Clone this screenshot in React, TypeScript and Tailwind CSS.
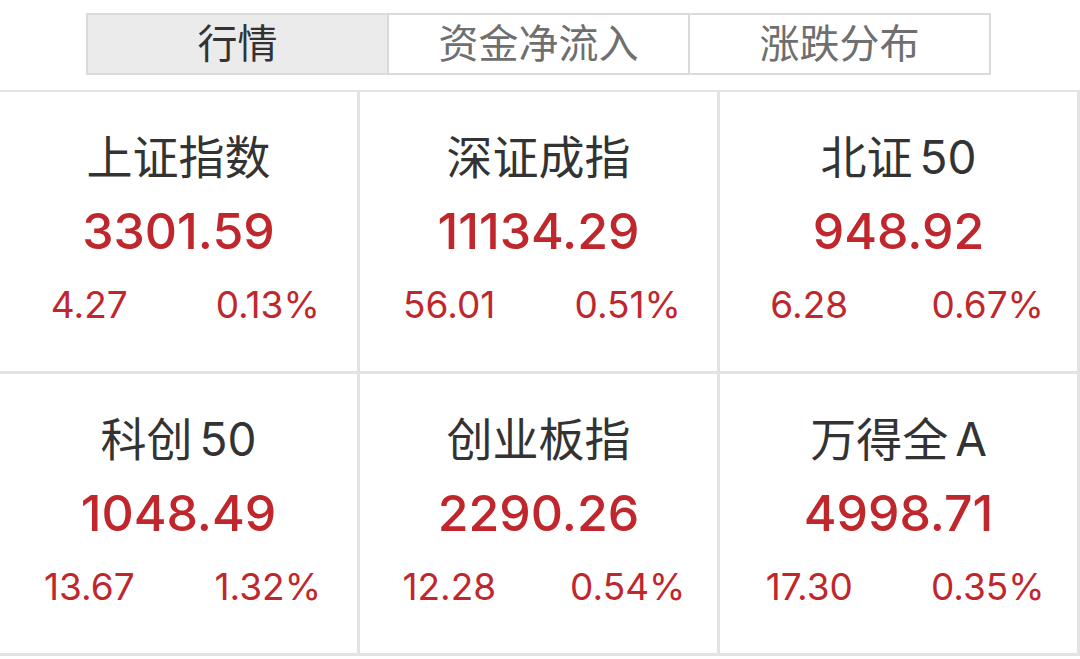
const tabs = ["行情", "资金净流入", "涨跌分布"];

const indices = [
  { name: "上证指数", suffix: "", price: "3301.59", change: "4.27", pct: "0.13%" },
  { name: "深证成指", suffix: "", price: "11134.29", change: "56.01", pct: "0.51%" },
  { name: "北证", suffix: "50", price: "948.92", change: "6.28", pct: "0.67%" },
  { name: "科创", suffix: "50", price: "1048.49", change: "13.67", pct: "1.32%" },
  { name: "创业板指", suffix: "", price: "2290.26", change: "12.28", pct: "0.54%" },
  { name: "万得全", suffix: "A", price: "4998.71", change: "17.30", pct: "0.35%" },
];

const font = { fontFamily: 'Inter, "Noto Sans CJK SC", sans-serif' };

export default function App() {
  return (
    <div className="w-[1080px] h-[659px] bg-white overflow-hidden" style={font}>
      <div className="pt-[13px] pl-[86px]">
        <div className="flex w-[905px] h-[62px] border-2 border-[#dadada]">
          {tabs.map((t, i) => (
            <div
              key={t}
              className={`flex-1 flex items-center justify-center text-[40px] leading-none ${
                i === 0 ? "bg-[#ebebeb] text-[#333333]" : "bg-white text-[#6f6f6f] border-l-2 border-[#dadada]"
              }`}
            >
              {t}
            </div>
          ))}
        </div>
      </div>

      <div className="mt-[15px] grid grid-cols-3 border-t-2 border-[#e3e3e3]">
        {indices.map((d) => (
          <div
            key={d.name}
            className="h-[282px] flex flex-col items-center border-r-[3px] border-b-[3px] border-[#e3e3e3]"
          >
            <div className="mt-[40px] h-[50px] text-[46px] leading-[50px] text-[#333333]">
              {d.name}
              {d.suffix && <span className="ml-[7px]">{d.suffix}</span>}
            </div>
            <div className="mt-[19px] h-[60px] text-[50px] leading-[60px] font-medium text-[#c0272d]">
              {d.price}
            </div>
            <div className="mt-[22px] w-full flex text-[37px] leading-[44px] text-[#c0272d]">
              <div className="flex-1 text-center">{d.change}</div>
              <div className="flex-1 text-center">{d.pct}</div>
            </div>
          </div>
        ))}
      </div>
    </div>
  );
}
